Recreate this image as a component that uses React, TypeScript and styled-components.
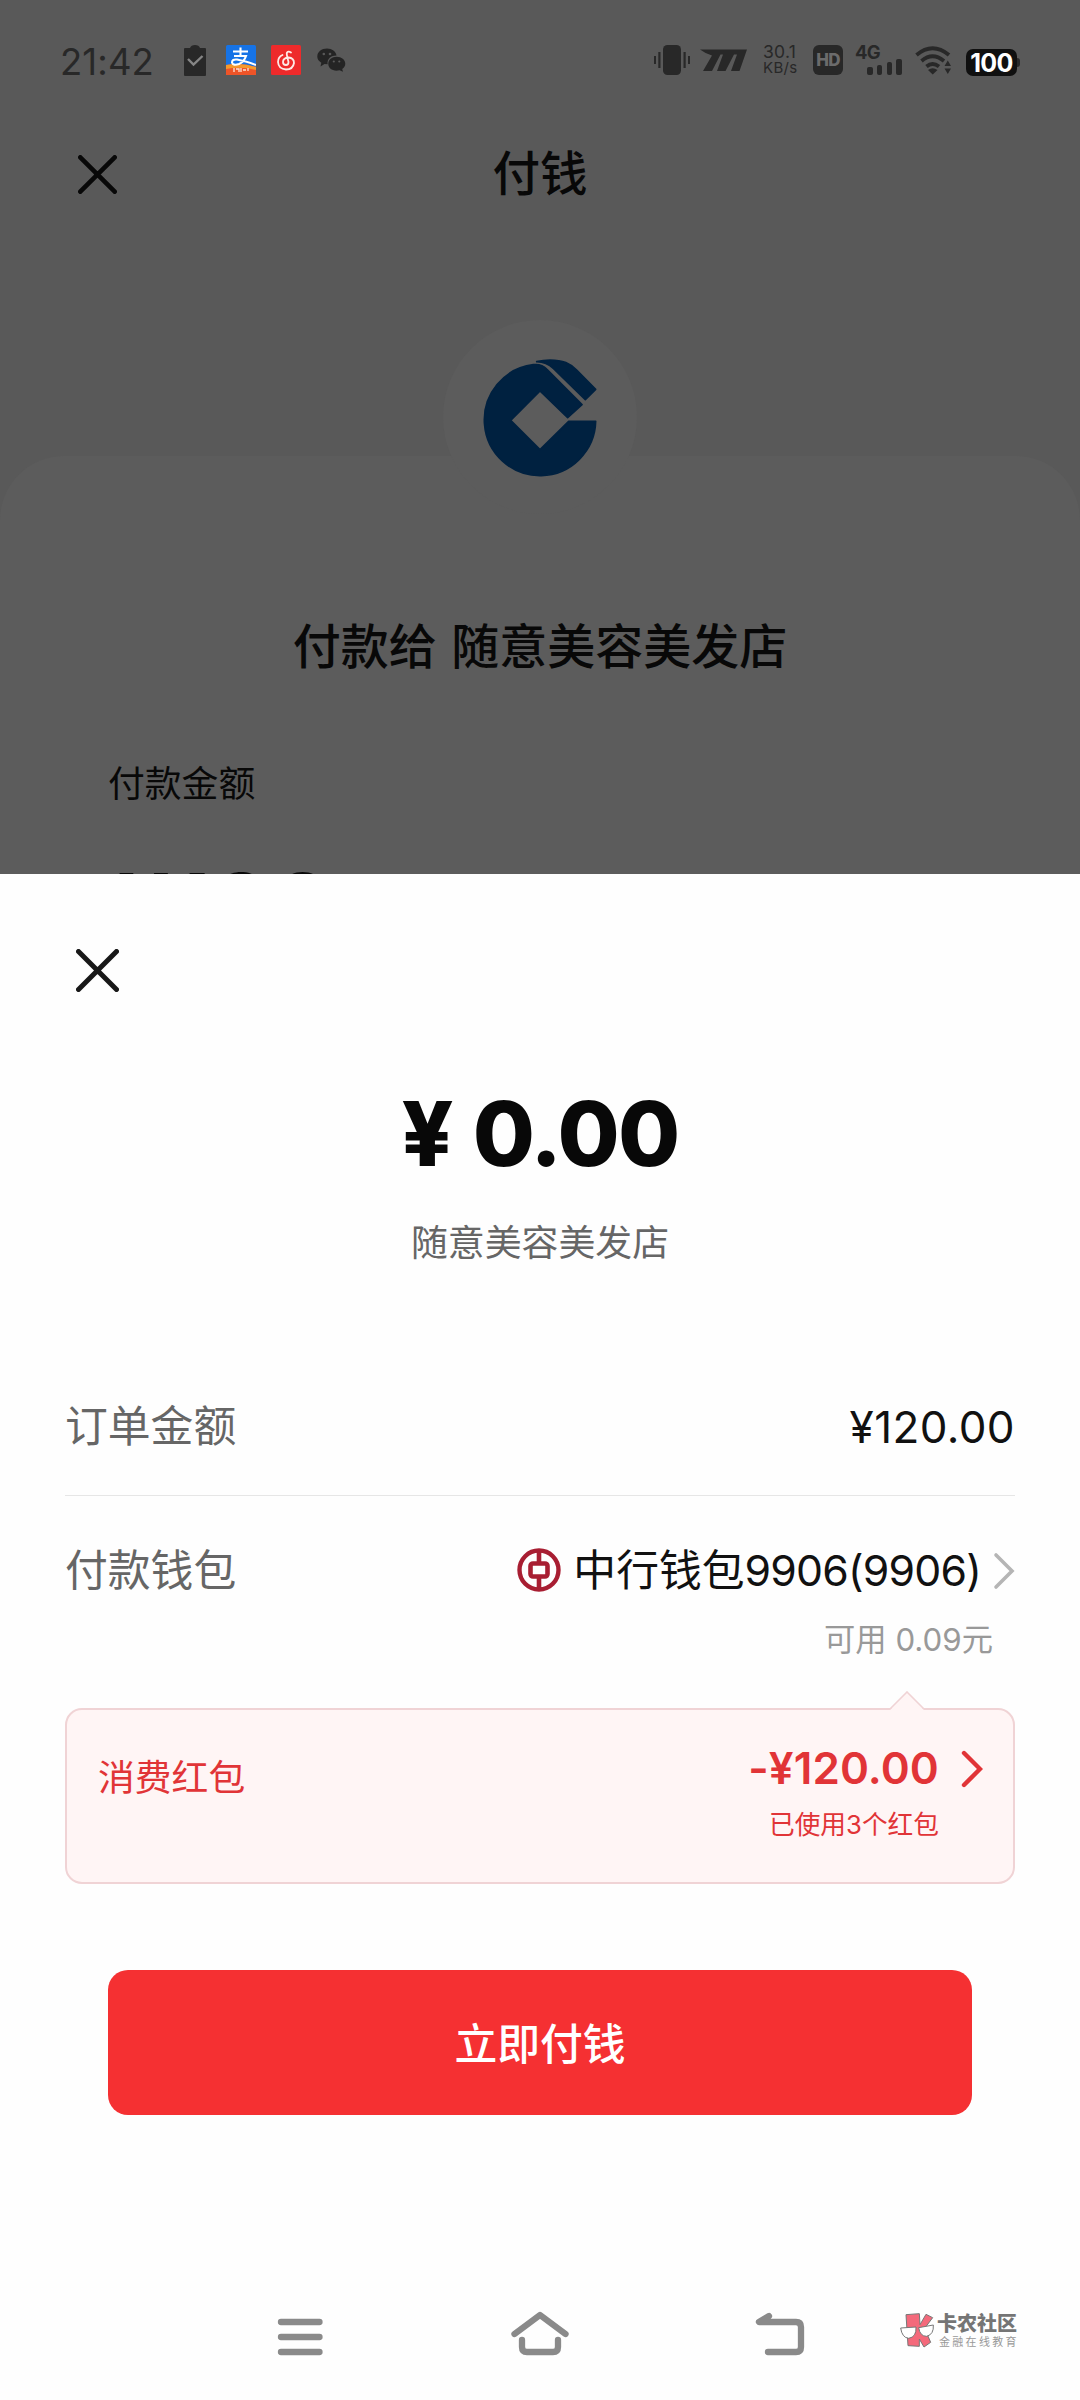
import React from "react";
import styled, { createGlobalStyle } from "styled-components";

const GlobalStyle = createGlobalStyle`
  html, body { margin: 0; padding: 0; background: #fff; }
  * { box-sizing: border-box; }
`;

const Screen = styled.div`
  width: 1080px;
  height: 2400px;
  display: flex;
  flex-direction: column;
  background: #fefefe;
  font-family: Inter, "Noto Sans CJK SC", sans-serif;
  overflow: hidden;
`;

/* ---------- dimmed page ---------- */

const Backdrop = styled.section`
  flex: none;
  height: 874px;
  display: flex;
  flex-direction: column;
  background: #595959;
  color: #080808;
  overflow: hidden;
`;

const StatusBar = styled.header`
  flex: none;
  height: 120px;
  padding: 0 60px;
  display: flex;
  justify-content: space-between;
  align-items: center;
  color: #282828;
`;

const StatusGroup = styled.div`
  display: flex;
  align-items: center;
`;

const Clock = styled.span`
  width: 124px;
  font-size: 36.5px;
  line-height: 44px;
  letter-spacing: 0.1px;
  padding-top: 4px;
`;

const AppIcon = styled.svg<{ $gap: number }>`
  display: block;
  flex: none;
  margin-left: ${(p) => p.$gap}px;
`;

const NetSpeed = styled.div`
  display: flex;
  flex-direction: column;
  width: 40px;
  margin-left: 15px;
  font-size: 17.5px;
  line-height: 16px;
  letter-spacing: 0.3px;
`;

const SpeedUnit = styled.span`
  font-size: 15px;
  letter-spacing: 0.3px;
`;

const HdBadge = styled.span`
  width: 30px;
  height: 30px;
  margin-left: 10px;
  border-radius: 6px;
  background: #282828;
  color: #6b6b6b;
  font-size: 17px;
  font-weight: 800;
  line-height: 31px;
  text-align: center;
  letter-spacing: -0.8px;
`;

const Signal = styled.div`
  width: 48px;
  height: 30px;
  margin-left: 12px;
  display: flex;
  flex-direction: column;
`;

const SignalLabel = styled.span`
  height: 14px;
  font-size: 18.5px;
  font-weight: 700;
  line-height: 15px;
  letter-spacing: -0.8px;
`;

const SignalBars = styled.div`
  height: 16px;
  padding-left: 12px;
  display: flex;
  align-items: flex-end;
  gap: 4.2px;
`;

const SignalBar = styled.i<{ $h: number }>`
  width: 5.6px;
  height: ${(p) => p.$h}px;
  border-radius: 2px;
  background: #282828;
`;

const Battery = styled.div`
  display: flex;
  align-items: center;
  margin: 4px 0 0 14px;
`;

const BatteryBody = styled.span`
  width: 51px;
  height: 27px;
  border-radius: 7px;
  background: #101010;
  color: #fff;
  font-size: 25px;
  font-weight: 700;
  line-height: 28px;
  text-align: center;
  letter-spacing: -0.6px;
`;

const BatteryCap = styled.i`
  width: 3px;
  height: 9px;
  border-radius: 0 3px 3px 0;
  background: #282828;
`;

const TitleBar = styled.div`
  flex: none;
  height: 108px;
  display: grid;
  grid-template-columns: 200px 1fr 200px;
  align-items: center;
  margin-bottom: 228px;
`;

const CloseIcon = styled.svg<{ $left: number }>`
  display: block;
  flex: none;
  margin-left: ${(p) => p.$left}px;
`;

const PageTitle = styled.h1`
  margin: 0;
  font-size: 47.5px;
  font-weight: 500;
  line-height: 60px;
  text-align: center;
`;

const PayPanel = styled.div`
  position: relative;
  flex: none;
  height: 418px;
  border-radius: 64px 64px 0 0;
  background: #5c5c5c;
`;

const BankBadge = styled.div`
  position: absolute;
  top: -136px;
  left: 443px;
  width: 194px;
  height: 194px;
  border-radius: 50%;
  background: #5c5c5c;
  padding: 37px 0 0 37px;
`;

const Payee = styled.h2`
  margin: 0;
  padding-top: 156px;
  font-size: 48px;
  font-weight: 500;
  line-height: 70px;
  text-align: center;
  word-spacing: 1.5px;
`;

const AmountLabel = styled.p`
  margin: 75px 0 0 108px;
  font-size: 36.8px;
  line-height: 54px;
`;

const AmountInput = styled.div`
  margin: 45px 0 0 118px;
  font-size: 90px;
  font-weight: 700;
  line-height: 100px;
  letter-spacing: 2.5px;
`;

/* ---------- payment sheet ---------- */

const Sheet = styled.main`
  flex: 1;
  display: flex;
  flex-direction: column;
  padding: 75px 65px 0;
  color: #111;
`;

const Total = styled.div`
  display: flex;
  justify-content: center;
  gap: 19px;
  margin-top: 80px;
  font-size: 90px;
  font-weight: 800;
  line-height: 124px;
  color: #080808;
`;

const TotalDigits = styled.span`
  letter-spacing: -1.8px;
`;

const Merchant = styled.p`
  margin: 20px 0 0;
  font-size: 36.9px;
  line-height: 54px;
  text-align: center;
  color: #666;
`;

const Details = styled.div`
  display: flex;
  flex-direction: column;
  margin-top: 86px;
`;

const Row = styled.div<{ $height: number; $drop?: number; $divided?: boolean }>`
  height: ${(p) => p.$height}px;
  padding-top: ${(p) => p.$drop ?? 0}px;
  display: flex;
  justify-content: space-between;
  align-items: center;
  border-bottom: ${(p) => (p.$divided ? "1px solid #e6e6e6" : "none")};
`;

const RowLabel = styled.span`
  font-size: 42.8px;
  line-height: 60px;
  color: #666;
`;

const OrderValue = styled.span`
  font-size: 44px;
  line-height: 60px;
  letter-spacing: 0.4px;
`;

const Wallet = styled.span`
  display: flex;
  align-items: center;
  font-size: 42.8px;
  line-height: 60px;
`;

const BankMark = styled.svg`
  margin-bottom: 3px;
`;

const WalletName = styled.span`
  margin: 0 12px 0 12px;
`;

const WalletNumber = styled.span`
  letter-spacing: -0.8px;
`;

const Balance = styled.p`
  margin: 0 22px 0 0;
  font-size: 31.3px;
  line-height: 44px;
  text-align: right;
  color: #999;
`;

const Coupon = styled.div`
  position: relative;
  height: 176px;
  margin-top: 46px;
  padding: 31px 30px 0 31px;
  display: flex;
  justify-content: space-between;
  align-items: flex-start;
  border: 2px solid #f0d3d5;
  border-radius: 17px;
  background: #fff5f5;
  color: #e13437;
`;

const CouponNotch = styled.svg`
  position: absolute;
  top: -19px;
  right: 88px;
`;

const CouponName = styled.span`
  font-size: 36.8px;
  line-height: 54px;
  padding-top: 10px;
`;

const CouponRight = styled.div`
  display: flex;
  align-items: flex-start;
  gap: 22px;
`;

const CouponFigures = styled.div`
  display: flex;
  flex-direction: column;
  align-items: flex-end;
`;

const CouponAmount = styled.span`
  font-size: 44px;
  font-weight: 600;
  line-height: 54px;
  letter-spacing: 0.1px;
`;

const CouponNote = styled.span`
  font-size: 25.7px;
  line-height: 38px;
  margin-top: 11px;
`;

const CouponArrow = styled.span`
  display: flex;
  padding-top: 9px;
`;

const PayButton = styled.button`
  height: 145px;
  margin: 86px 43px 0;
  border: 0;
  border-radius: 20px;
  background: #f53032;
  color: #fff;
  font-family: inherit;
  font-size: 42.8px;
  font-weight: 500;
  padding: 0 0 4px;
`;

const NavBar = styled.nav`
  flex: none;
  height: 130px;
  display: flex;
  align-items: center;
  padding: 4px 0 0 274px;
`;

const NavIcon = styled.svg<{ $gap: number }>`
  flex: none;
  margin-right: ${(p) => p.$gap}px;
  fill: none;
  stroke: #8a8a8a;
  stroke-width: 6.3px;
  stroke-linecap: round;
  stroke-linejoin: round;
`;

const Watermark = styled.div`
  display: flex;
  align-items: center;
  gap: 2px;
  margin-top: -12px;
`;

const WatermarkText = styled.div`
  display: flex;
  flex-direction: column;
  color: #757575;
`;

const WatermarkName = styled.span`
  font-size: 20px;
  font-weight: 900;
  line-height: 22px;
`;

const WatermarkTag = styled.span`
  font-size: 11px;
  line-height: 14px;
  letter-spacing: 2.3px;
  color: #999;
  margin-left: 2px;
`;

function Cross({ size, left, width, color }: { size: number; left: number; width: number; color: string }) {
  const p = width / 2;
  return (
    <CloseIcon $left={left} width={size} height={size} stroke={color} strokeWidth={width} strokeLinecap="round">
      <path d={`M${p} ${p}L${size - p} ${size - p}M${size - p} ${p}L${p} ${size - p}`} />
    </CloseIcon>
  );
}

function Chevron({ color, width }: { color: string; width: number }) {
  return (
    <svg width="22" height="38" viewBox="0 0 22 38" fill="none" stroke={color} strokeWidth={width} strokeLinecap="round">
      <path d="M3 3L19 19L3 35" />
    </svg>
  );
}

function StatusIcons() {
  return (
    <StatusGroup>
      <Clock>21:42</Clock>
      <AppIcon $gap={0} width="22" height="31" viewBox="0 0 22 31">
        <path d="M1 3H6Q7 0 11 0Q15 0 16 3H21Q22 3 22 4V30Q22 31 21 31H1Q0 31 0 30V4Q0 3 1 3Z" fill="#282828" />
        <path d="M4 14L9.500 19.500L18.500 11" fill="none" stroke="#858585" strokeWidth="2.4" />
      </AppIcon>
      <AppIcon $gap={20} width="30" height="30" viewBox="0 0 30 30">
        <rect width="30" height="30" rx="1.5" fill="#1673e6" />
        <path d="M0 20Q15 17 30 22V30H0Z" fill="#ee5428" />
        <path d="M0 20Q15 17 30 22V25Q15 21 0 24Z" fill="#f59a2d" />
        <path d="M7 6.500H22M14.500 2.500V11M8 11H20Q18 17 13 19Q7 21 6 17.500Q6 14 11 14.500Q19 16 30 20" fill="none" stroke="#fff" strokeWidth="2.1" />
        <path d="M8 23V27M10 24H13V27M15 23V27M17 25H20M22 23V26" stroke="#fde4d4" strokeWidth="1.3" fill="none" />
      </AppIcon>
      <AppIcon $gap={15} width="30" height="30" viewBox="0 0 30 30">
        <rect width="30" height="30" rx="1.5" fill="#ee2a2b" />
        <path
          d="M20 7.500Q17 5.500 15.800 8Q15.500 9.500 17.500 17Q17.500 20 15 20Q12 20 12 17Q12 13 17.500 12.500Q23 13 23 18Q22 24.500 15 24.500Q7.500 24 7 17Q7 12 11.500 10"
          fill="none"
          stroke="#ffe9e6"
          strokeWidth="1.8"
          strokeLinecap="round"
        />
      </AppIcon>
      <AppIcon $gap={16} width="29" height="24" viewBox="0 0 29 24">
        <path d="M10 0.500C15 0.500 19 3.500 19.500 7.600C14 7.600 10 11 10.600 16.300L7.500 16L3.500 18.500L4.300 14.700C1.500 13 0.300 11 0.300 8.500C0.300 4 4.500 0.500 10 0.500Z" fill="#242424" />
        <path d="M19.600 8.800C24.500 8.800 28.300 12 28.300 15.800C28.300 18 27 19.800 25.200 21L26 23.800L22.600 22.300C16 23.800 11.300 20.500 11.300 15.800C11.300 12 15 8.800 19.600 8.800Z" fill="#242424" />
        <g fill="#595959">
          <circle cx="6.800" cy="6" r="1.300" />
          <circle cx="13" cy="6" r="1.300" />
          <circle cx="16.800" cy="13.500" r="1.100" />
          <circle cx="22.300" cy="13.500" r="1.100" />
        </g>
      </AppIcon>
    </StatusGroup>
  );
}

function SystemIcons() {
  return (
    <StatusGroup>
      <AppIcon $gap={0} width="36" height="30" viewBox="0 0 36 30" fill="#282828">
        <rect x="9" width="18" height="30" rx="4.500" />
        <rect y="11" width="2" height="8" />
        <rect x="4.300" y="7" width="2.200" height="16" />
        <rect x="29.500" y="7" width="2.200" height="16" />
        <rect x="34" y="11" width="2" height="8" />
      </AppIcon>
      <AppIcon $gap={10} width="48" height="23" viewBox="0 0 48 23" fill="#282828">
        <path d="M0 0.500H47L39.500 22H31L37 5.500H34L25.500 22H17L23 5.500H20.500L12 22H3L12 6.500Q6 5 0 0.500Z" />
      </AppIcon>
      <NetSpeed>
        <span>30.1</span>
        <SpeedUnit>KB/s</SpeedUnit>
      </NetSpeed>
      <HdBadge>HD</HdBadge>
      <Signal>
        <SignalLabel>4G</SignalLabel>
        <SignalBars>
          {[8, 10, 13, 16].map((h) => (
            <SignalBar key={h} $h={h} />
          ))}
        </SignalBars>
      </Signal>
      <AppIcon $gap={12} width="37" height="29" viewBox="0 0 37 29">
        <g fill="none" stroke="#282828" strokeWidth="3.800">
          <path d="M1.500 9Q17.500 -4.500 34 9" />
          <path d="M6.500 15Q17.500 5.500 29 15" />
          <path d="M11.500 20.500Q17.500 15.500 24 20.500" />
        </g>
        <path d="M13 24Q17.500 20.500 22.500 24L17.700 28.500Z" fill="#282828" />
        <path d="M29.500 20L32.800 14.500L36 20ZM29.500 22.500H36L32.800 28Z" fill="#282828" />
      </AppIcon>
      <Battery>
        <BatteryBody>100</BatteryBody>
        <BatteryCap />
      </Battery>
    </StatusGroup>
  );
}

export default function App() {
  return (
    <Screen>
      <GlobalStyle />
      <Backdrop>
        <StatusBar>
          <StatusIcons />
          <SystemIcons />
        </StatusBar>
        <TitleBar>
          <Cross size={39} left={78} width={4.6} color="#080808" />
          <PageTitle>付钱</PageTitle>
        </TitleBar>
        <PayPanel>
          <BankBadge>
            <svg width="120" height="124" viewBox="240 170 360 372" fill="#002140" stroke="#002140" strokeWidth="5" strokeLinejoin="round">
              <path d="M587 363H506L420 448L332 360L420 272L503 352L546 313L440 206Q425 190 400 193A167 167 0 1 0 587 363Z" />
              <path d="M410 184Q430 179 450 179C490 179 510 190 530 209L587 267L556 298L460 204Q440 185 410 184Z" />
            </svg>
          </BankBadge>
          <Payee>付款给 随意美容美发店</Payee>
          <AmountLabel>付款金额</AmountLabel>
          <AmountInput>¥120</AmountInput>
        </PayPanel>
      </Backdrop>

      <Sheet>
        <Cross size={43} left={11} width={5} color="#181818" />
        <Total>
          <span>¥</span>
          <TotalDigits>0.00</TotalDigits>
        </Total>
        <Merchant>随意美容美发店</Merchant>
        <Details>
          <Row $height={140} $drop={2} $divided>
            <RowLabel>订单金额</RowLabel>
            <OrderValue>¥120.00</OrderValue>
          </Row>
          <Row $height={122} $drop={28}>
            <RowLabel>付款钱包</RowLabel>
            <Wallet>
              <BankMark width="44" height="44" viewBox="0 0 44 44" fill="none" stroke="#a81e32">
                <circle cx="22" cy="22" r="19.500" strokeWidth="4.400" />
                <rect x="13.500" y="15.500" width="17" height="13" rx="2.500" strokeWidth="4.600" />
                <path d="M22 2V14M22 30V42" strokeWidth="4.600" />
              </BankMark>
              <WalletName>
                中行钱包<WalletNumber>9906(9906)</WalletNumber>
              </WalletName>
              <Chevron color="#b5b5b5" width={3.6} />
            </Wallet>
          </Row>
          <Balance>可用 0.09元</Balance>
        </Details>
        <Coupon>
          <CouponNotch width="36" height="20" viewBox="0 0 36 20">
            <path d="M1 19L18 1.500L35 19V20H1Z" fill="#fff5f5" />
            <path d="M1 18L18 1L35 18" fill="none" stroke="#f0d3d5" strokeWidth="1.600" />
          </CouponNotch>
          <CouponName>消费红包</CouponName>
          <CouponRight>
            <CouponFigures>
              <CouponAmount>-¥120.00</CouponAmount>
              <CouponNote>已使用3个红包</CouponNote>
            </CouponFigures>
            <CouponArrow>
              <Chevron color="#e13437" width={4.4} />
            </CouponArrow>
          </CouponRight>
        </Coupon>
        <PayButton>立即付钱</PayButton>
      </Sheet>

      <NavBar>
        <NavIcon $gap={184} width="52" height="52" viewBox="274 2311 52 52">
          <path d="M281 2322H319.500M281 2337H319.500M281 2352H319.500" />
        </NavIcon>
        <NavIcon $gap={184} width="60" height="52" viewBox="510 2311 60 52">
          <path d="M514.500 2334L540 2315L565.500 2334M522 2340V2347Q522 2352 527 2352H553Q558 2352 558 2347V2340" />
        </NavIcon>
        <NavIcon $gap={94} width="52" height="52" viewBox="754 2311 52 52">
          <path d="M769 2316L759 2322H796Q801 2322 801 2327V2347Q801 2352 796 2352H768" />
        </NavIcon>
        <Watermark>
          <svg width="35" height="36" viewBox="0 0 105 108" stroke="#777" strokeWidth="3">
            <path d="M18 5L58 2L60 35L78 4L98 14L74 46L92 88L72 102L58 78V100L24 98Z" fill="#f4697b" />
            <path d="M2 45L48 42Q50 72 26 76Q6 74 2 45ZM56 44L100 36Q102 64 80 70Q60 70 56 44Z" fill="#fff" />
          </svg>
          <WatermarkText>
            <WatermarkName>卡农社区</WatermarkName>
            <WatermarkTag>金融在线教育</WatermarkTag>
          </WatermarkText>
        </Watermark>
      </NavBar>
    </Screen>
  );
}
